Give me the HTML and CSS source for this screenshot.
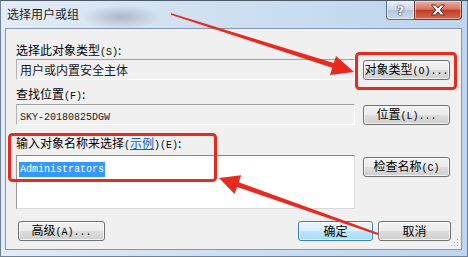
FILE: index.html
```html
<!DOCTYPE html>
<html lang="zh-CN">
<head>
<meta charset="UTF-8">
<title>选择用户或组</title>
<link rel="stylesheet" href="styles.css">
</head>
<body>
<div class="window">
    <div class="titlebar">
        <span class="title">选择用户或组</span>
        <div class="caption-btns">
            <span class="cap help">?</span>
            <span class="cap close">
                <svg width="16" height="12" viewBox="0 0 16 12"><path d="M1.5 1 H5.5 L8 4 L10.5 1 H14.5 L10.3 6 L14.5 11 H10.5 L8 8 L5.5 11 H1.5 L5.7 6 Z" fill="#fff" stroke="#5a2a22" stroke-width="1"/></svg>
            </span>
        </div>
    </div>

    <div class="client">
        <div class="label">选择此对象类型<span class="acc">(S)</span>:</div>
        <div class="row">
            <div class="field">用户或内置安全主体</div>
            <button class="btn">对象类型<span class="acc">(O)...</span></button>
        </div>

        <div class="label gap-s">查找位置<span class="acc">(F)</span>:</div>
        <div class="row row-2">
            <div class="field"><span class="mono">SKY-20180825DGW</span></div>
            <button class="btn">位置<span class="acc">(L)...</span></button>
        </div>

        <div class="label gap-l">输入对象名称来选择<span class="acc">(</span><a class="link">示例</a><span class="acc">)(E)</span>:</div>
        <div class="row row-3">
            <div class="names"><span class="mono selected">Administrators</span></div>
            <button class="btn btn-top">检查名称<span class="acc">(C)</span></button>
        </div>

        <div class="footer">
            <button class="btn btn-wide">高级<span class="acc">(A)...</span></button>
            <div class="spacer"></div>
            <button class="btn btn-default">确定</button>
            <button class="btn btn-cancel">取消</button>
        </div>

        <svg class="grip" width="8" height="8" viewBox="0 0 8 8">
            <rect x="6" y="0" width="1" height="1" fill="#a8a8a8"/>
            <rect x="3" y="3" width="1" height="1" fill="#a8a8a8"/>
            <rect x="6" y="3" width="1" height="1" fill="#a8a8a8"/>
            <rect x="0" y="6" width="1" height="1" fill="#a8a8a8"/>
            <rect x="3" y="6" width="1" height="1" fill="#a8a8a8"/>
            <rect x="6" y="6" width="1" height="1" fill="#a8a8a8"/>
        </svg>
    </div>

    <!-- red annotations drawn over the dialog -->
    <svg class="marks" width="468" height="257" viewBox="0 0 468 257">
        <rect x="356.5" y="53.5" width="99" height="35" rx="3" fill="none" stroke="#e8291f" stroke-width="3"/>
        <rect x="9.5" y="134.5" width="206" height="46" rx="3" fill="none" stroke="#e8291f" stroke-width="3"/>
        <polygon points="171.2,13.3 333.8,63 336,55.9 354,72 330,74.9 332.2,67.8 170.8,14.7" fill="#e8291f"/>
        <polygon points="378.3,233.1 238.7,182.2 241.2,175.2 219,178 234.6,194 237.1,187 377.7,234.9" fill="#e8291f"/>
    </svg>
</div>
</body>
</html>
```

FILE: styles.css
```css
body {
    margin: 0;
    font-family: "Noto Sans CJK SC", sans-serif;
    font-size: 12px;
    color: #000;
    overflow: hidden;
}

.window {
    position: relative;
    width: 468px;
    height: 257px;
    display: flex;
    flex-direction: column;
    box-sizing: border-box;
    border: 1px solid #6f8196;
    border-top-color: #4d5a68;
    background:
        radial-gradient(ellipse 40px 12px at 120px 16px, rgba(90, 100, 115, 0.35), transparent),
        linear-gradient(to right, #e3ecf6 0%, #d3e2f1 35%, #bdd5ee 100%);
}

.titlebar {
    height: 27px;
    display: flex;
    align-items: flex-start;
}

.title {
    padding: 5px 0 0 6px;
    line-height: 16px;
    color: #1b1b1b;
}

.caption-btns {
    margin-left: auto;
    margin-right: 5px;
    display: flex;
}

.cap {
    height: 19px;
    box-sizing: border-box;
    border: 1px solid #5f6f84;
    border-top: none;
    display: flex;
    align-items: center;
    justify-content: center;
    box-shadow: inset 0 0 0 1px rgba(255, 255, 255, 0.45);
}

.help {
    width: 28px;
    border-right: none;
    border-radius: 0 0 0 4px;
    background: linear-gradient(#e6eef7, #cbd8e8 48%, #b4c6db 52%, #cbdbeb);
    color: #fff;
    font-family: "DejaVu Sans", sans-serif;
    font-weight: bold;
    font-size: 13px;
    text-shadow: 0 0 1px #3c4a5c, 0 0 1px #3c4a5c, 0 0 2px #3c4a5c;
}

.close {
    width: 48px;
    border-color: #7a3325;
    border-radius: 0 0 4px 0;
    background: linear-gradient(#eab0a2, #d67562 45%, #c23b24 52%, #d86a4e);
}

.client {
    position: relative;
    flex: 1;
    margin: 0 5px 6px 4px;
    border: 1px solid #8496ad;
    background: #f0f0f0;
    padding: 13px 11px 0 10px;
    display: flex;
    flex-direction: column;
}

.label {
    height: 16px;
    line-height: 16px;
    white-space: nowrap;
}

.gap-s {
    margin-top: 6px;
}

.gap-l {
    margin-top: 10px;
}

.acc {
    font-family: "Liberation Mono", monospace;
    font-size: 10px;
}

.link {
    color: #0066cc;
    text-decoration: underline;
}

.row {
    display: flex;
    gap: 8px;
    align-items: flex-end;
    margin-top: 1px;
}

.row-2 {
    margin-top: 2px;
}

.row-3 {
    margin-top: 4px;
    align-items: flex-start;
}

.field {
    flex: 1;
    height: 21px;
    box-sizing: border-box;
    border: 1px solid;
    border-color: #a0a0a0 #ffffff #ffffff #b4b4b4;
    padding-left: 3px;
    line-height: 19px;
    color: #1a1a1a;
}

.mono {
    font-family: "Liberation Mono", monospace;
    font-size: 10px;
}

.names {
    flex: 1;
    height: 54px;
    box-sizing: border-box;
    border: 1px solid;
    border-color: #828790 #d9d9d9 #d9d9d9 #9a9a9a;
    background: #fff;
    padding: 2px 0 0 2px;
}

.selected {
    display: inline-block;
    line-height: 15px;
    padding: 0 1px;
    background: #3399ff;
    color: #fff;
}

.btn {
    width: 87px;
    height: 20px;
    box-sizing: border-box;
    padding: 0;
    border: 1px solid #707070;
    border-radius: 3px;
    background: linear-gradient(#f2f2f2 0%, #ebebeb 50%, #dddddd 51%, #cfcfcf 100%);
    box-shadow: inset 0 0 0 1px rgba(255, 255, 255, 0.7);
    font-family: "Noto Sans CJK SC", sans-serif;
    font-size: 12px;
    line-height: 16px;
    color: #000;
    white-space: nowrap;
    flex-shrink: 0;
}

.btn-top {
    margin-top: 2px;
}

.footer {
    display: flex;
    gap: 5px;
    margin-top: 12px;
    padding-left: 2px;
    margin-right: -1px;
}

.spacer {
    flex: 1;
}

.btn-default {
    width: 75px;
    border-color: #3c7fb1;
    background: linear-gradient(#eaf6fd 0%, #d9f0fc 50%, #bee6fd 51%, #a7d9f5 100%);
}

.btn-cancel {
    width: 73px;
}

.grip {
    position: absolute;
    right: 2px;
    bottom: 2px;
}

.marks {
    position: absolute;
    left: -1px;
    top: -1px;
    pointer-events: none;
}
```
